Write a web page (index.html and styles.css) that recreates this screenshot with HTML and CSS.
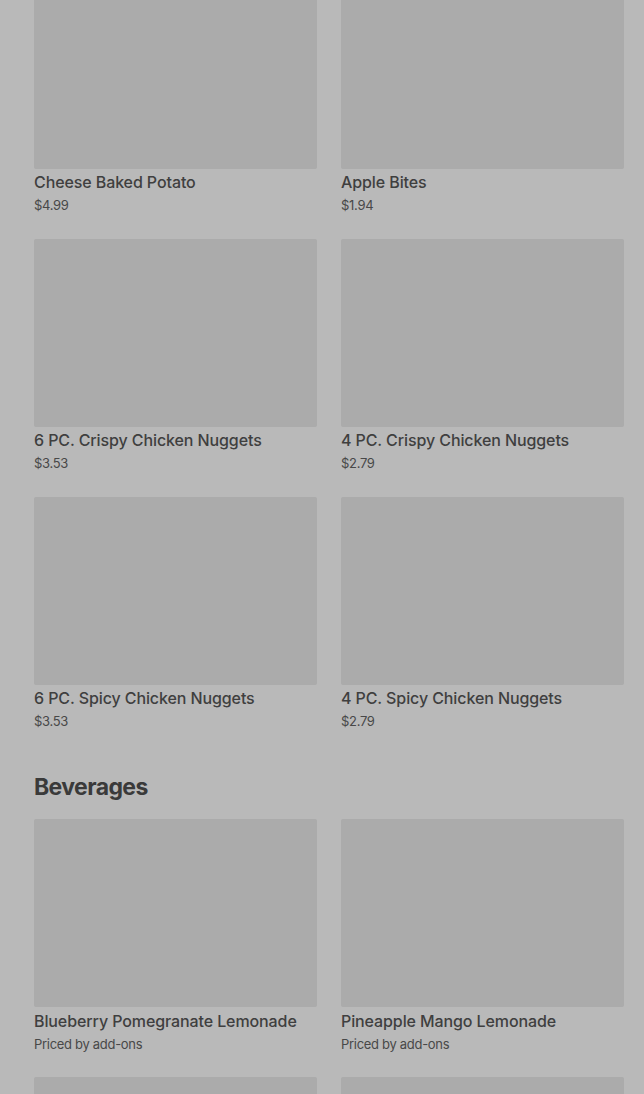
FILE: index.html
```html
<!DOCTYPE html>
<html>
<head>
<meta charset="utf-8">
<link rel="stylesheet" href="styles.css">
</head>
<body>
<main class="menu">
  <section class="grid grid-first">
    <div class="card"><div class="thumb"></div><div class="name">Cheese Baked Potato</div><div class="price">$4.99</div></div>
    <div class="card"><div class="thumb"></div><div class="name">Apple Bites</div><div class="price">$1.94</div></div>
    <div class="card"><div class="thumb"></div><div class="name">6 PC. Crispy Chicken Nuggets</div><div class="price">$3.53</div></div>
    <div class="card"><div class="thumb"></div><div class="name">4 PC. Crispy Chicken Nuggets</div><div class="price">$2.79</div></div>
    <div class="card"><div class="thumb"></div><div class="name">6 PC. Spicy Chicken Nuggets</div><div class="price">$3.53</div></div>
    <div class="card"><div class="thumb"></div><div class="name">4 PC. Spicy Chicken Nuggets</div><div class="price">$2.79</div></div>
  </section>
  <h2 class="heading">Beverages</h2>
  <section class="grid">
    <div class="card"><div class="thumb"></div><div class="name">Blueberry Pomegranate Lemonade</div><div class="price">Priced by add-ons</div></div>
    <div class="card"><div class="thumb"></div><div class="name">Pineapple Mango Lemonade</div><div class="price">Priced by add-ons</div></div>
    <div class="card"><div class="thumb"></div><div class="name">&nbsp;</div><div class="price">&nbsp;</div></div>
    <div class="card"><div class="thumb"></div><div class="name">&nbsp;</div><div class="price">&nbsp;</div></div>
  </section>
</main>
</body>
</html>
```

FILE: styles.css
```css
html, body {
  margin: 0;
  padding: 0;
  background: #b9b9b9;
  overflow: hidden;
  height: 1094px;
}
body {
  font-family: Inter, "Noto Sans", sans-serif;
  color: #3d3d3d;
}
.menu {
  padding: 0 20px 0 34px;
}
.grid {
  display: grid;
  grid-template-columns: 283px 283px;
  column-gap: 24px;
  row-gap: 22.5px;
}
.grid-first {
  margin-top: -19.5px;
}
.card {
  display: flex;
  flex-direction: column;
}
.thumb {
  height: 188px;
  background: #ababab;
  border-radius: 2px;
}
.name {
  margin-top: 1.5px;
  font-size: 16px;
  line-height: 24px;
  font-weight: 500;
  letter-spacing: -0.1px;
  color: #3f3f3f;
  white-space: nowrap;
}
.price {
  font-size: 13px;
  line-height: 22px;
  color: #484848;
  letter-spacing: -0.3px;
}
.heading {
  margin: 39px 0 16px;
  font-size: 23px;
  line-height: 32px;
  font-weight: 700;
  letter-spacing: -0.6px;
  color: #3a3a3a;
}
```
